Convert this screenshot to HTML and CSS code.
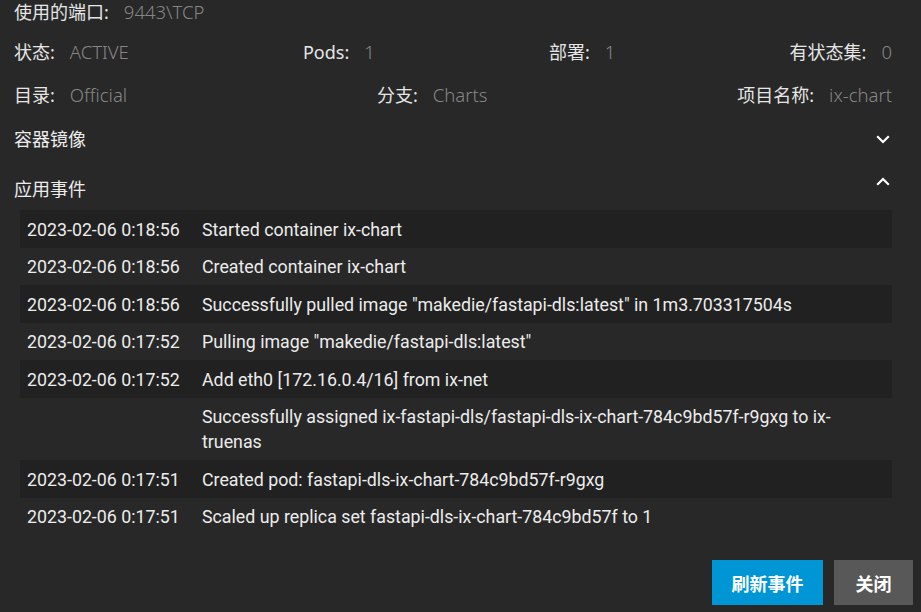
FILE: index.html
```html
<!DOCTYPE html>
<html lang="zh-CN">
<head>
<meta charset="utf-8">
<title>应用事件</title>
<link rel="stylesheet" href="styles.css">
</head>
<body>
<div class="page">
  <div class="info-row row-port">
    <div class="item"><span class="label">使用的端口:</span><span class="value">9443\TCP</span></div>
  </div>
  <div class="info-row row-status">
    <div class="item"><span class="label">状态:</span><span class="value">ACTIVE</span></div>
    <div class="item"><span class="label">Pods:</span><span class="value">1</span></div>
    <div class="item"><span class="label">部署:</span><span class="value">1</span></div>
    <div class="item"><span class="label">有状态集:</span><span class="value">0</span></div>
  </div>
  <div class="info-row row-catalog">
    <div class="item"><span class="label">目录:</span><span class="value">Official</span></div>
    <div class="item"><span class="label">分支:</span><span class="value">Charts</span></div>
    <div class="item"><span class="label">项目名称:</span><span class="value">ix-chart</span></div>
  </div>

  <div class="section-head head-images">
    <span class="section-title">容器镜像</span>
    <svg class="chev" width="14" height="9" viewBox="0 0 14 9"><polyline points="1.2,1.2 7,7 12.8,1.2" fill="none" stroke="#ffffff" stroke-width="2.2"/></svg>
  </div>
  <div class="section-head head-events">
    <span class="section-title">应用事件</span>
    <svg class="chev chev-up" width="14" height="9" viewBox="0 0 14 9"><polyline points="1.2,7.8 7,2 12.8,7.8" fill="none" stroke="#ffffff" stroke-width="2.2"/></svg>
  </div>

  <div class="events">
    <div class="ev"><span class="ev-time">2023-02-06 0:18:56</span><span class="ev-msg">Started container ix-chart</span></div>
    <div class="ev"><span class="ev-time">2023-02-06 0:18:56</span><span class="ev-msg">Created container ix-chart</span></div>
    <div class="ev"><span class="ev-time">2023-02-06 0:18:56</span><span class="ev-msg">Successfully pulled image "makedie/fastapi-dls:latest" in 1m3.703317504s</span></div>
    <div class="ev"><span class="ev-time">2023-02-06 0:17:52</span><span class="ev-msg">Pulling image "makedie/fastapi-dls:latest"</span></div>
    <div class="ev"><span class="ev-time">2023-02-06 0:17:52</span><span class="ev-msg">Add eth0 [172.16.0.4/16] from ix-net</span></div>
    <div class="ev"><span class="ev-time"></span><span class="ev-msg">Successfully assigned ix-fastapi-dls/fastapi-dls-ix-chart-784c9bd57f-r9gxg to ix-<br>truenas</span></div>
    <div class="ev"><span class="ev-time">2023-02-06 0:17:51</span><span class="ev-msg">Created pod: fastapi-dls-ix-chart-784c9bd57f-r9gxg</span></div>
    <div class="ev"><span class="ev-time">2023-02-06 0:17:51</span><span class="ev-msg">Scaled up replica set fastapi-dls-ix-chart-784c9bd57f to 1</span></div>
  </div>

  <div class="actions">
    <button class="btn btn-primary">刷新事件</button>
    <button class="btn btn-secondary">关闭</button>
  </div>
</div>
</body>
</html>
```
FILE: styles.css
```css
html, body {
  margin: 0;
  padding: 0;
  background: #282828;
}
body {
  width: 921px;
  height: 612px;
  overflow: hidden;
  font-family: "Noto Sans", "Noto Sans CJK SC", sans-serif;
  color: #e8e8e8;
}
.page {
  padding: 0 29px 0 14px;
}
.info-row {
  display: flex;
  justify-content: space-between;
  line-height: 24px;
  height: 24px;
  font-size: 18px;
}
.row-status { margin-top: 16px; }
.row-catalog { margin-top: 19px; }
.item {
  white-space: nowrap;
}
.label {
  color: #e6e6e6;
}
.value {
  color: #868686;
  margin-left: 15px;
  font-weight: 300;
  font-size: 18.5px;
}
.section-head {
  display: flex;
  justify-content: space-between;
  align-items: center;
  height: 24px;
  line-height: 24px;
  font-size: 18px;
  color: #ececec;
}
.head-images { margin-top: 20px; }
.head-events { margin-top: 26px; }
.chev {
  margin-right: 2px;
  display: block;
}
.chev-up {
  margin-top: -16px;
}
.events {
  margin: 9px 0 0 6px;
  font-family: Roboto, "Noto Sans", sans-serif;
  font-size: 17.8px;
  color: #ececec;
}
.ev {
  display: flex;
  padding: 6.5px 7px 6px;
  line-height: 25px;
}
.ev:nth-child(odd) {
  background: #212121;
}
.ev-time {
  flex: 0 0 175px;
  white-space: nowrap;
}
.ev-msg {
  flex: 1;
}
.actions {
  display: flex;
  justify-content: flex-end;
  gap: 11px;
  margin: 25px -21px 0 0;
}
.btn {
  border: none;
  height: 45px;
  font-family: "Noto Sans CJK SC", sans-serif;
  font-size: 18px;
  font-weight: 700;
  color: #ffffff;
  padding: 0;
  cursor: pointer;
}
.btn-primary {
  width: 111px;
  background: #0096d6;
}
.btn-secondary {
  width: 79px;
  background: #585858;
}
```
